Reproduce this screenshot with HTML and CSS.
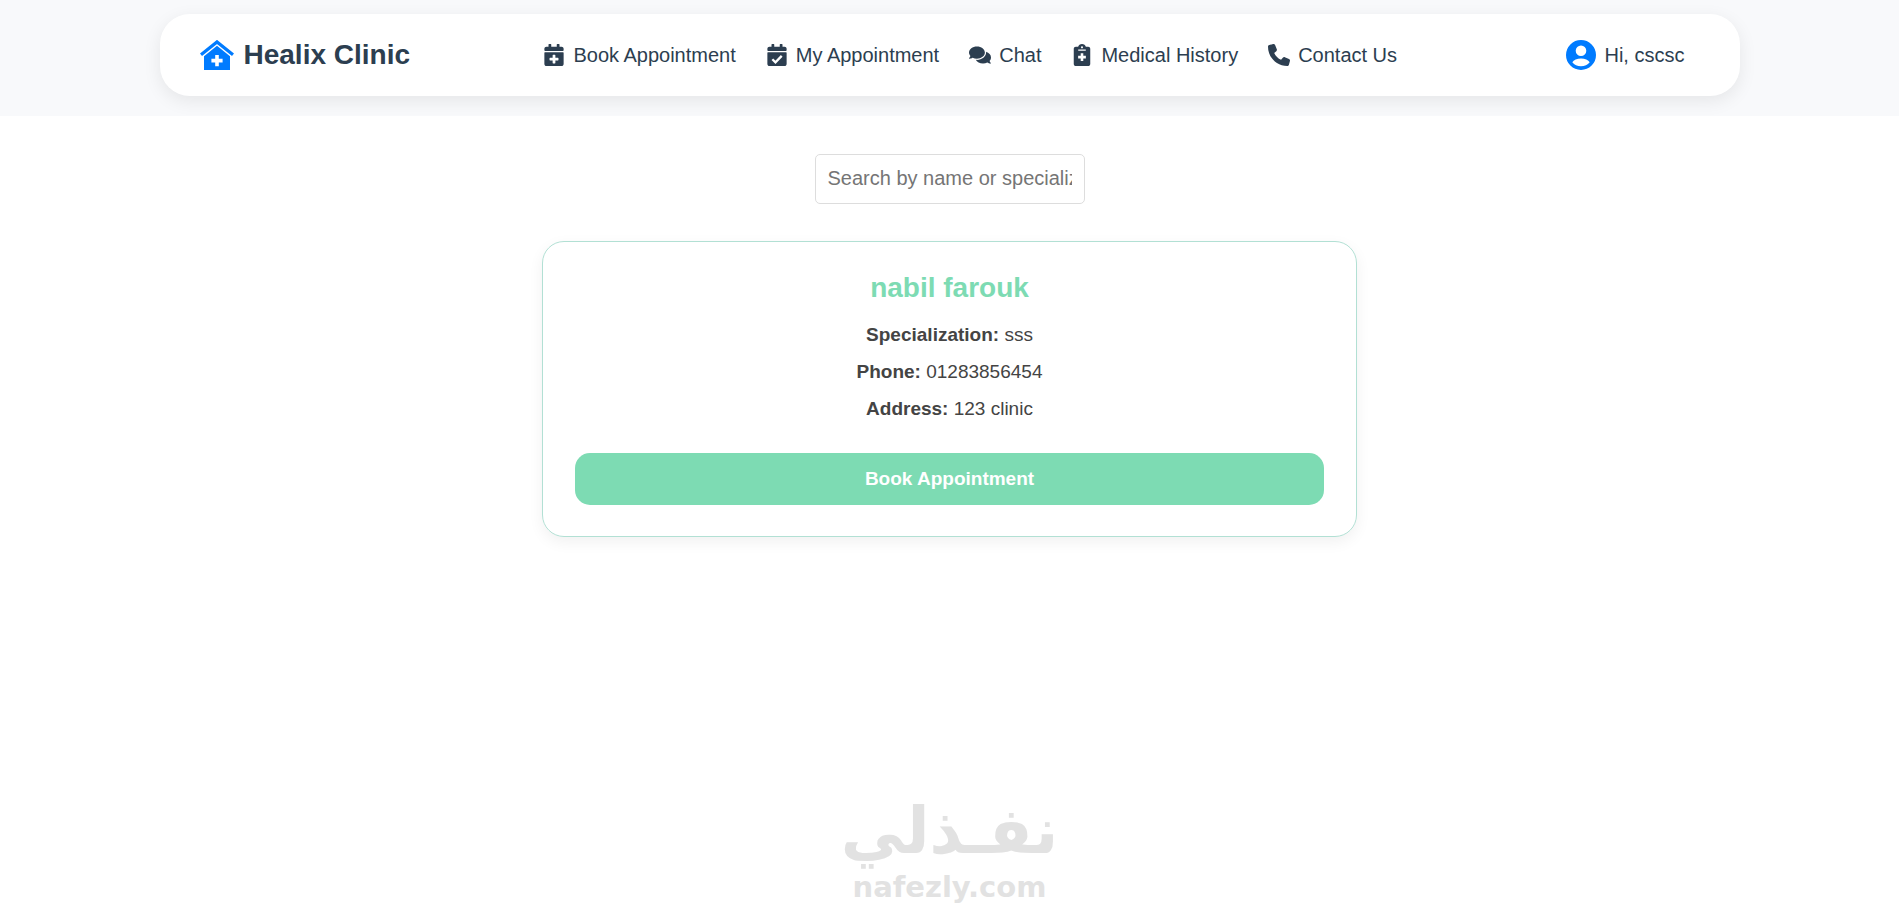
FILE: index.html
```html
<!DOCTYPE html>
<html lang="en">
<head>
    <meta charset="UTF-8">
    <meta name="viewport" content="width=device-width, initial-scale=1.0">
    <title>Healix Clinic</title>
    <link rel="stylesheet" href="styles.css">
</head>
<body>
    <header class="header">
        <nav class="navbar">
            <a href="#" class="logo">
                <svg class="logo-icon" viewBox="0 0 34 30" aria-hidden="true">
                    <path d="M1 14.800 17 1.900l16 12.900" fill="none" stroke="currentColor" stroke-width="3.200"/>
                    <path fill="currentColor" fill-rule="evenodd" d="M17 5.800 30 16.300V30H4V16.300zM15.200 15v3.800h-3.800v3.600h3.800v3.800h3.600v-3.800h3.800v-3.600h-3.800V15z"/>
                </svg>
                Healix Clinic
            </a>
            <ul class="nav-links">
                <li><a href="#">
                    <svg class="icon" viewBox="0 0 448 512" aria-hidden="true"><path d="M436 160H12c-6.600 0-12-5.400-12-12v-36c0-26.500 21.500-48 48-48h48V12c0-6.600 5.400-12 12-12h40c6.600 0 12 5.400 12 12v52h128V12c0-6.600 5.400-12 12-12h40c6.600 0 12 5.400 12 12v52h48c26.500 0 48 21.500 48 48v36c0 6.600-5.400 12-12 12zM12 192h424c6.600 0 12 5.400 12 12v260c0 26.500-21.500 48-48 48H48c-26.500 0-48-21.500-48-48V204c0-6.600 5.400-12 12-12zm316 140c0-6.600-5.400-12-12-12h-60v-60c0-6.600-5.400-12-12-12h-40c-6.600 0-12 5.400-12 12v60h-60c-6.600 0-12 5.400-12 12v40c0 6.600 5.400 12 12 12h60v60c0 6.600 5.400 12 12 12h40c6.600 0 12-5.400 12-12v-60h60c6.600 0 12-5.400 12-12v-40z"/></svg>
                    Book Appointment
                </a></li>
                <li><a href="#">
                    <svg class="icon" viewBox="0 0 448 512" aria-hidden="true"><path d="M436 160H12c-6.600 0-12-5.400-12-12v-36c0-26.500 21.500-48 48-48h48V12c0-6.600 5.400-12 12-12h40c6.600 0 12 5.400 12 12v52h128V12c0-6.600 5.400-12 12-12h40c6.600 0 12 5.400 12 12v52h48c26.500 0 48 21.500 48 48v36c0 6.600-5.400 12-12 12zM12 192h424c6.600 0 12 5.400 12 12v260c0 26.500-21.500 48-48 48H48c-26.500 0-48-21.500-48-48V204c0-6.600 5.400-12 12-12z"/><path class="icon-mark" d="M116 355l72 72 146-150"/></svg>
                    My Appointment
                </a></li>
                <li><a href="#">
                    <svg class="icon" viewBox="0 0 576 512" aria-hidden="true"><path d="M416 192c0-88.400-93.100-160-208-160S0 103.600 0 192c0 34.300 14.100 65.900 38 92-13.400 30.200-35.500 54.200-35.800 54.500-2.200 2.300-2.800 5.700-1.500 8.700S4.800 352 8 352c36.600 0 66.900-12.300 88.700-25 32.200 15.700 70.300 25 111.300 25 114.900 0 208-71.600 208-160zm122 220c23.900-26 38-57.700 38-92 0-66.900-53.500-124.200-129.300-148.100.9 6.600 1.300 13.300 1.300 20.100 0 105.900-107.700 192-240 192-10.800 0-21.300-.8-31.700-1.900C207.800 439.600 281.800 480 368 480c41 0 79.100-9.200 111.300-25 21.800 12.700 52.100 25 88.700 25 3.200 0 6.100-1.900 7.300-4.800 1.300-2.900.7-6.300-1.500-8.700-.3-.3-22.400-24.200-35.800-54.500z"/></svg>
                    Chat
                </a></li>
                <li><a href="#">
                    <svg class="icon" viewBox="0 0 384 512" aria-hidden="true"><path fill-rule="evenodd" d="M336 64h-54.500C275 27 236 0 192 0s-83 27-89.500 64H48C21.500 64 0 85.500 0 112v352c0 26.500 21.500 48 48 48h288c26.500 0 48-21.500 48-48V112c0-26.500-21.500-48-48-48zM192 54a24 24 0 1 1 0 48 24 24 0 0 1 0-48zM104 130h176v28H104zM162 216h60v60h60v60h-60v60h-60v-60h-60v-60h60z"/></svg>
                    Medical History
                </a></li>
                <li><a href="#">
                    <svg class="icon" viewBox="0 0 512 512" aria-hidden="true"><path d="M164.900 24.600c-7.700-18.600-28-28.500-47.400-23.200l-88 24C12.100 30.200 0 46 0 64c0 247.400 200.600 448 448 448 18 0 33.800-12.100 38.600-29.500l24-88c5.300-19.400-4.600-39.700-23.200-47.400l-96-40c-16.300-6.800-35.200-2.100-46.300 11.600L304.700 368C234.300 334.700 177.300 277.700 144 207.300L193.300 167c13.700-11.200 18.400-30 11.600-46.300l-40-96z"/></svg>
                    Contact Us
                </a></li>
            </ul>
            <a href="#" class="user">
                <svg class="user-icon" viewBox="0 0 30 30" aria-hidden="true"><path fill="currentColor" fill-rule="evenodd" d="M15 0a15 15 0 1 1 0 30 15 15 0 0 1 0-30zm0 5.500a5.300 5.300 0 1 0 0 10.600 5.300 5.300 0 0 0 0-10.600zM15 18.400c-4 0-7.400 1.500-8.700 3.800 2 2.500 5.100 4 8.700 4s6.700-1.500 8.700-4c-1.300-2.300-4.700-3.800-8.700-3.800z"/></svg>
                Hi, cscsc
            </a>
        </nav>
    </header>

    <main class="doctors">
        <input type="text" class="search" placeholder="Search by name or specialization" aria-label="Search by name or specialization">

        <section class="doctor-card">
            <h2>nabil farouk</h2>
            <p><strong>Specialization:</strong> sss</p>
            <p><strong>Phone:</strong> 01283856454</p>
            <p><strong>Address:</strong> 123 clinic</p>
            <button type="button" class="book-btn">Book Appointment</button>
        </section>
    </main>

    <footer class="footer">
        <span class="brand-ar" lang="ar" dir="rtl">نفـذلي</span>
        <span class="brand-en">nafezly.com</span>
    </footer>
</body>
</html>
```
FILE: styles.css
```css
* {
    box-sizing: border-box;
}
body {
    font-family: Arial, "Liberation Sans", sans-serif;
    background: #fff;
    color: #2c3e50;
    margin: 0;
    min-height: 100vh;
    display: flex;
    flex-direction: column;
}
a {
    color: inherit;
    text-decoration: none;
}

/* navbar */
.header {
    background: #f8f9fb;
    padding: 14px 20px 20px;
}
.navbar {
    display: flex;
    align-items: center;
    justify-content: space-between;
    max-width: 1580px;
    min-height: 82px;
    margin: 0 auto;
    padding: 0 40px;
    background: #fff;
    border-radius: 30px;
    box-shadow: 0 5px 18px rgba(0, 0, 0, 0.08);
}
.logo {
    display: flex;
    align-items: center;
    gap: 10px;
    font-size: 28px;
    font-weight: bold;
}
.logo-icon {
    width: 34px;
    height: 30px;
    color: #007bff;
}
.nav-links {
    display: flex;
    gap: 30px;
    margin: 0;
    padding: 0;
    list-style: none;
}
.nav-links a,
.user {
    display: flex;
    align-items: center;
    gap: 8px;
    font-size: 20px;
}
.user {
    padding: 0 15px 0 36px;
}
.icon {
    width: 22px;
    height: 22px;
    fill: currentColor;
}
.icon-mark {
    fill: none;
    stroke: #fff;
    stroke-width: 54;
}
.user-icon {
    width: 30px;
    height: 30px;
    color: #007bff;
}

/* doctors list */
.doctors {
    display: flex;
    flex-direction: column;
    align-items: center;
    gap: 37px;
    padding: 38px 20px;
}
.search {
    width: 270px;
    height: 50px;
    padding: 11px 12px 13px;
    border: 1px solid #ddd;
    border-radius: 5px;
    font-family: inherit;
    font-size: 20px;
}
.search::placeholder {
    color: #757575;
}
.doctor-card {
    width: 100%;
    max-width: 815px;
    padding: 32px 32px 31px;
    border: 1px solid #b2e0d4;
    border-radius: 22px;
    box-shadow: 0 5px 15px rgba(0, 0, 0, 0.06);
    text-align: center;
    color: #444;
}
.doctor-card h2 {
    margin: 0 0 20px;
    font-size: 28px;
    line-height: 28px;
    color: #7ddbb3;
}
.doctor-card p {
    margin: 0 0 11px;
    font-size: 19px;
    line-height: 26px;
}
.book-btn {
    width: 100%;
    margin-top: 20px;
    padding: 15px;
    border: none;
    border-radius: 15px;
    background: #7ddbb3;
    color: #fff;
    font-family: inherit;
    font-size: 19px;
    font-weight: bold;
    line-height: 22px;
    cursor: pointer;
}

/* footer brand */
.footer {
    display: flex;
    flex-direction: column;
    align-items: center;
    margin-top: auto;
    color: #e2e2e2;
    font-family: "DejaVu Sans", sans-serif;
    font-weight: bold;
}
.brand-ar {
    font-size: 64px;
    line-height: 76px;
}
.brand-en {
    font-size: 29px;
    line-height: 36px;
}
```
